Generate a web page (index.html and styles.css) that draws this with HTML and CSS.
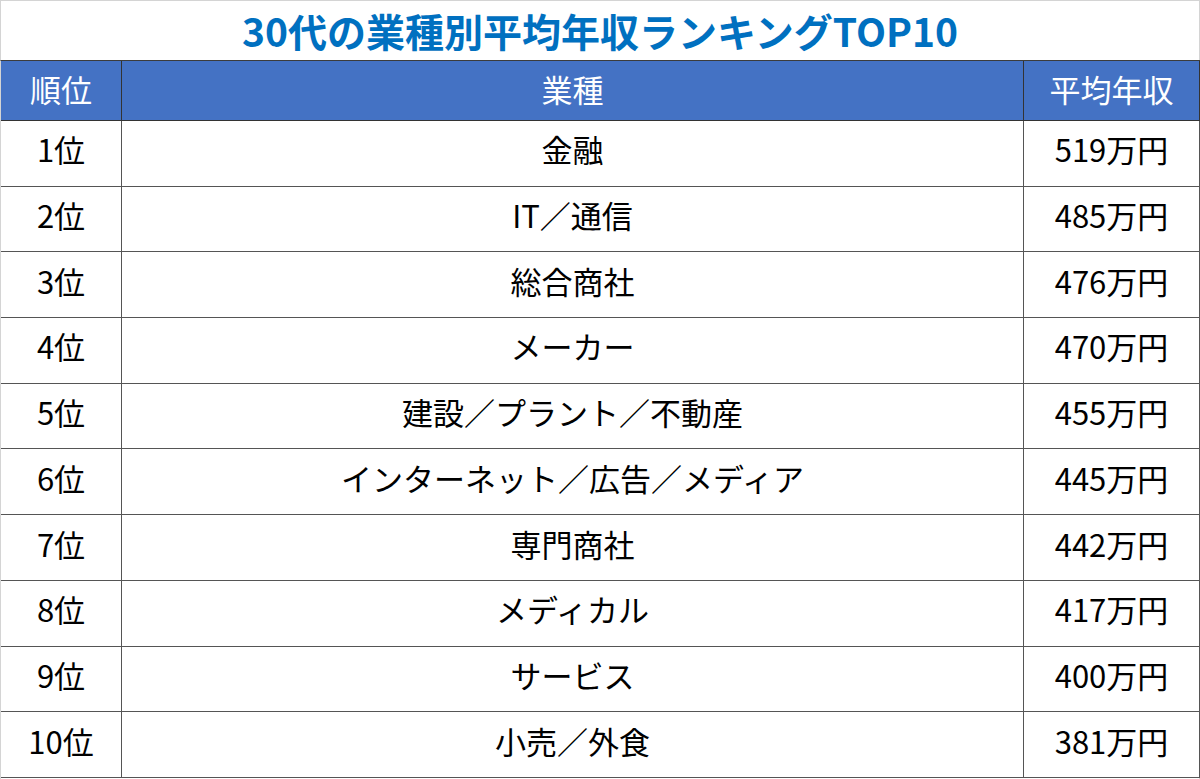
FILE: index.html
```html
<!DOCTYPE html>
<html lang="ja">
<head>
<meta charset="utf-8">
<title>30代の業種別平均年収ランキングTOP10</title>
<link rel="stylesheet" href="styles.css">
</head>
<body>
<div class="frame">
  <h1 class="title">30代の業種別平均年収ランキングTOP10</h1>
  <div class="grid">
    <div class="cell head">順位</div><div class="cell head">業種</div><div class="cell head">平均年収</div>
    <div class="cell">1位</div><div class="cell">金融</div><div class="cell">519万円</div>
    <div class="cell">2位</div><div class="cell">IT／通信</div><div class="cell">485万円</div>
    <div class="cell">3位</div><div class="cell">総合商社</div><div class="cell">476万円</div>
    <div class="cell">4位</div><div class="cell">メーカー</div><div class="cell">470万円</div>
    <div class="cell">5位</div><div class="cell">建設／プラント／不動産</div><div class="cell">455万円</div>
    <div class="cell">6位</div><div class="cell">インターネット／広告／メディア</div><div class="cell">445万円</div>
    <div class="cell">7位</div><div class="cell">専門商社</div><div class="cell">442万円</div>
    <div class="cell">8位</div><div class="cell">メディカル</div><div class="cell">417万円</div>
    <div class="cell">9位</div><div class="cell">サービス</div><div class="cell">400万円</div>
    <div class="cell">10位</div><div class="cell">小売／外食</div><div class="cell">381万円</div>
  </div>
</div>
</body>
</html>
```

FILE: styles.css
```css
html, body {
  margin: 0;
  padding: 0;
  background: #ffffff;
}
.frame {
  width: 1200px;
  height: 779px;
  box-sizing: border-box;
  border-top: 1px solid #d4d4d4;
  border-left: 1px solid #d4d4d4;
  border-right: 1px solid #d4d4d4;
  display: flex;
  flex-direction: column;
  font-family: "Noto Sans CJK JP", "Noto Sans", sans-serif;
}
.title {
  margin: 0;
  height: 59px;
  display: flex;
  align-items: center;
  justify-content: center;
  font-size: 39px;
  font-weight: 700;
  color: #0070c0;
  letter-spacing: 0;
  padding-bottom: 2px;
  box-sizing: border-box;
}
.grid {
  margin-left: -1px;
  margin-right: -1px;
  height: 718px;
  display: grid;
  grid-template-columns: 121px 902px 1fr;
  grid-template-rows: 60px repeat(10, 1fr);
  border-top: 1px solid #3c3c3c;
  border-left: 1px solid #d4d4d4;
  box-sizing: border-box;
}
.cell {
  display: flex;
  align-items: center;
  justify-content: center;
  border-right: 1.5px solid #555555;
  border-bottom: 1.5px solid #555555;
  font-size: 31px;
  color: #000000;
  padding-bottom: 9px;
  box-sizing: border-box;
}
.head {
  background: #4472c4;
  color: #ffffff;
  border-bottom-color: #333333;
  border-right-color: #333333;
  padding-bottom: 5px;
}
```
